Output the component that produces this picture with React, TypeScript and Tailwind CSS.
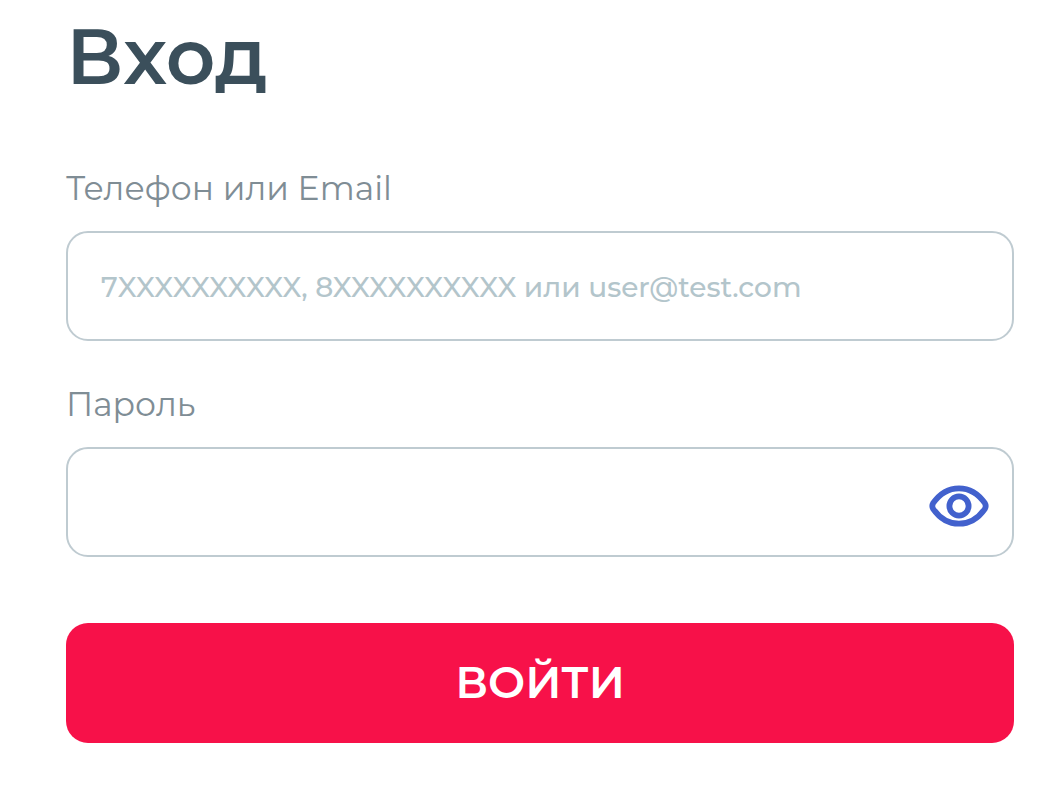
import { FormEvent, useState } from "react";

const inputClass =
  "h-[110px] w-full rounded-[22px] border-2 border-[#bfcbd1] bg-white px-[33px] pt-0.5 text-[28px] font-medium text-[#3b4f5b] outline-none placeholder:text-[#b3c5cb] placeholder:opacity-100";

const labelClass = "mb-[19px] block text-[33px] leading-12 font-normal text-[#7f8d95]";

function EyeIcon() {
  return (
    <svg viewBox="0 0 60 42" className="h-[42px] w-[60px]" fill="none" stroke="#4261cd" aria-hidden="true">
      <path
        d="M4.1 18.2C10.5 9 19.5 3.3 30 3.3S49.5 9 55.9 18.2Q57.5 21 55.9 23.8C49.5 33 40.5 38.7 30 38.7S10.5 33 4.1 23.8Q2.5 21 4.1 18.2Z"
        strokeWidth="5.8"
        strokeLinejoin="round"
      />
      <circle cx="30" cy="21" r="9.6" strokeWidth="5.8" />
    </svg>
  );
}

export default function App() {
  const [login, setLogin] = useState("");
  const [password, setPassword] = useState("");
  const [isPasswordVisible, setIsPasswordVisible] = useState(false);

  function handleSubmit(event: FormEvent<HTMLFormElement>) {
    event.preventDefault();
  }

  return (
    <main className="min-h-screen bg-white pt-4 pr-[50px] pb-12 pl-[66px] font-['Montserrat','Inter',sans-serif]">
      <h1 className="text-[77px] leading-20 font-semibold text-[#3b4f5b]">Вход</h1>

      <form onSubmit={handleSubmit} className="mt-[68px] flex flex-col gap-[39px]">
        <div>
          <label htmlFor="login" className={labelClass}>
            Телефон или Email
          </label>
          <input
            id="login"
            type="text"
            value={login}
            onChange={(event) => setLogin(event.target.value)}
            placeholder="7XXXXXXXXXX, 8XXXXXXXXXX или user@test.com"
            className={inputClass}
          />
        </div>

        <div>
          <label htmlFor="password" className={labelClass}>
            Пароль
          </label>
          <div className="relative">
            <input
              id="password"
              type={isPasswordVisible ? "text" : "password"}
              value={password}
              onChange={(event) => setPassword(event.target.value)}
              className={`${inputClass} pr-28`}
            />
            <button
              type="button"
              aria-label="Показать пароль"
              aria-pressed={isPasswordVisible}
              onClick={() => setIsPasswordVisible((visible) => !visible)}
              className="absolute inset-y-0 right-[25px] flex cursor-pointer items-center pt-2"
            >
              <EyeIcon />
            </button>
          </div>
        </div>

        <button
          type="submit"
          className="mt-[27px] h-[120px] w-full cursor-pointer rounded-[22px] bg-[#f71149] pb-0.5 text-[44px] font-semibold text-white"
        >
          ВОЙТИ
        </button>
      </form>
    </main>
  );
}
